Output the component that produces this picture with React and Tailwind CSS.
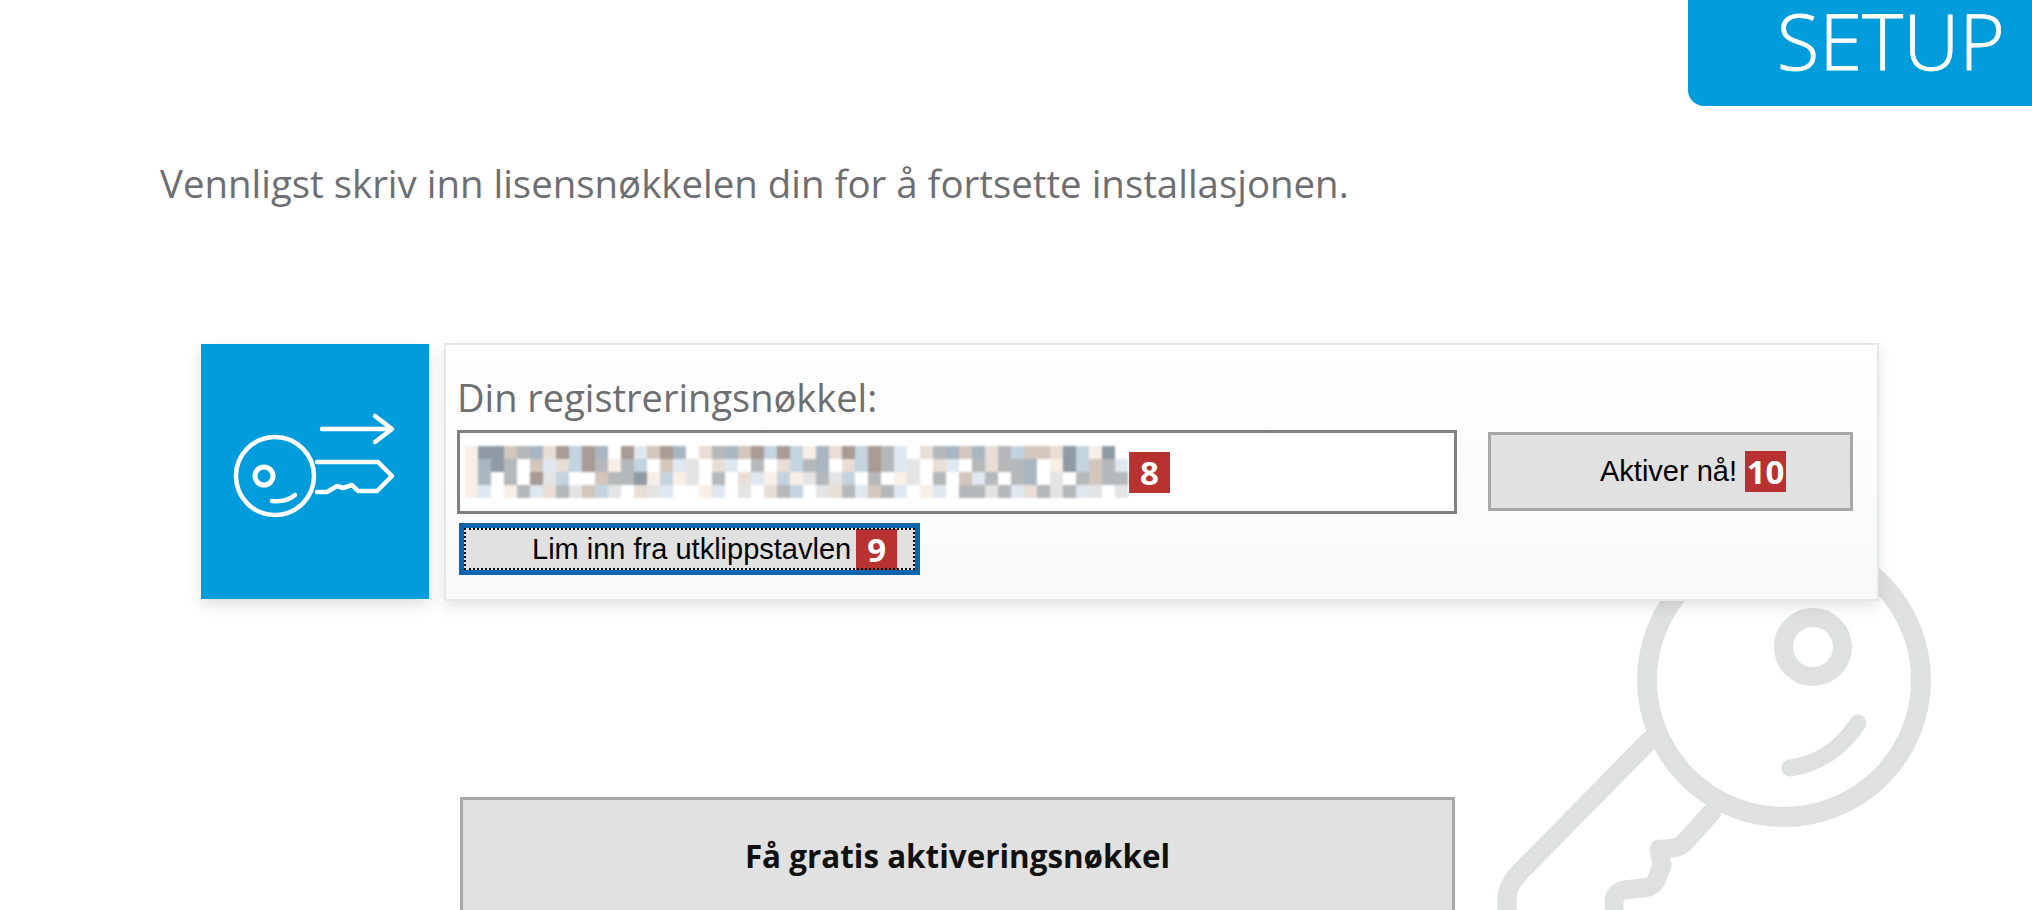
const farger = {
  ".": "#ffffff",
  a: "#f8efe6",
  b: "#dfe8f0",
  c: "#e4e4e4",
  d: "#a9b6c2",
  e: "#8f9aa5",
  f: "#a89a94",
  g: "#d3c6bc",
  h: "#c3d3e0",
  i: "#b5b8ba",
  j: "#e8ded5",
};

const rader = [
  "aeegidjfhfd.fbgfd.jidgfhfhadjfhfib.jidgdjihggjehae.",
  "adei.gbjhfiaih.gbc.jb.i.jhid.jhfibc.jb.ijiid.aehgib",
  "ad.i.fch..giieahac.i.jbahacich.i.ac.i.gbi.id.c.igii",
  "ab.aibjicghc.jcb..ab.c.jih.cjibgib.ab.iicibjicibc.c",
];

function ClaveBorrosa() {
  return (
    <svg width="663" height="52" viewBox="0 0 663 52" className="blur-[1px] shrink-0">
      {rader.map((rad, y) =>
        rad.split("").map((c, x) => (
          <rect key={x + "-" + y} x={x * 13} y={y * 13} width="13" height="13" fill={farger[c]} />
        ))
      )}
    </svg>
  );
}

function Merke({ children, className = "" }) {
  return (
    <span className={`inline-flex items-center justify-center w-[41px] h-[41px] bg-[#b83232] text-white text-[33px] font-bold font-['Open_Sans',sans-serif] leading-none shrink-0 ${className}`}>
      {children}
    </span>
  );
}

function Nokkel() {
  return (
    <svg width="228" height="255" viewBox="201 345 228 255" fill="none" stroke="#ffffff" strokeLinecap="round" strokeLinejoin="round">
      <circle cx="275" cy="477" r="39" strokeWidth="4.5" />
      <circle cx="264" cy="477" r="9" strokeWidth="5" />
      <path d="M272 502c9 1 17-1 23-6" strokeWidth="4.5" />
      <path d="M317 463h61l14 14-15 15h-19l-6-6-9 3-6-2-10 6h-10" strokeWidth="4.5" />
      <path d="M322 430h68M375 417l17 13-17 13" strokeWidth="4.5" />
    </svg>
  );
}

function BakgrunnNokkel() {
  return (
    <svg className="absolute left-0 top-0" width="2032" height="910" viewBox="0 0 2032 910" fill="none" stroke="#dfe0e0" strokeLinecap="round" strokeLinejoin="round">
      <circle cx="1784" cy="680" r="137" strokeWidth="20" />
      <circle cx="1813" cy="647" r="29.5" strokeWidth="19" />
      <path d="M1790 768c28-4 52-20 68-45" strokeWidth="17" />
      <path d="M1650 740L1520 872c-9 9-13 18-13 28v30" strokeWidth="19" />
      <path d="M1712 812l-29 32c-6 5-18 5-24 5l3 16-6 16c-4 6-8 7-14 7l-18 2c-6 1-10 6-10 12v30" strokeWidth="19" />
    </svg>
  );
}

export default function App() {
  return (
    <div className="relative w-full h-[910px] overflow-hidden bg-white font-['Open_Sans',sans-serif]">
      <BakgrunnNokkel />

      <div className="relative">
        <div className="flex justify-end">
          <div className="w-[344px] h-[106px] bg-[#009cdc] rounded-bl-[16px] flex justify-end pr-[27px] pt-[1px] text-white text-[78px] font-light leading-[78px] [-webkit-text-stroke:0.8px_white]">
            SETUP
          </div>
        </div>

        <h1 className="mt-[52px] ml-[160px] text-[38.4px] leading-[50px] font-normal text-[#6d6e71]">
          Vennligst skriv inn lisensnøkkelen din for å fortsette installasjonen.
        </h1>

        <div className="mt-[136px] ml-[201px] flex items-start">
          <div className="w-[228px] h-[255px] bg-[#009cdc] shadow-[0_6px_14px_rgba(0,0,0,0.12)]">
            <Nokkel />
          </div>

          <div className="ml-[15px] -mt-px w-[1435px] h-[258px] border-2 border-[#e6e7e7] bg-gradient-to-b from-white to-[#f8f9f9] shadow-[0_6px_14px_rgba(0,0,0,0.1)] pl-[11px]">
            <div className="h-[85px] flex items-end pb-[11px] text-[38px] leading-[44px] text-[#6d6e71]">
              Din registreringsnøkkel:
            </div>

            <div className="flex items-start">
              <div>
                <div className="w-[1000px] h-[84px] border-[3px] border-[#808080] bg-white flex items-center pl-[5px]">
                  <ClaveBorrosa />
                  <Merke className="ml-[1px]">8</Merke>
                </div>
                <button className="mt-[9px] ml-[2px] w-[461px] h-[52px] border-[5px] border-[#0a66ac] bg-[#e1e1e1] outline-dotted outline-2 outline-black -outline-offset-[7px] flex items-center pl-[68px] text-[29px] leading-none text-black font-['Liberation_Sans',sans-serif]">
                  Lim inn fra utklippstavlen
                  <Merke className="ml-[5px]">9</Merke>
                </button>
              </div>

              <button className="ml-[31px] mt-[2px] w-[365px] h-[79px] border-[3px] border-[#a8a8a8] bg-[#e1e1e1] flex items-center pl-[109px] text-[29px] leading-none text-black font-['Liberation_Sans',sans-serif]">
                Aktiver nå!
                <Merke className="ml-[8px]">10</Merke>
              </button>
            </div>
          </div>
        </div>

        <button className="block mt-[196px] ml-[460px] w-[995px] h-[118px] border-[3px] border-[#a8a8a8] bg-[#e1e1e1] text-[31.4px] font-bold text-[#111111]">
          Få gratis aktiveringsnøkkel
        </button>
      </div>
    </div>
  );
}
